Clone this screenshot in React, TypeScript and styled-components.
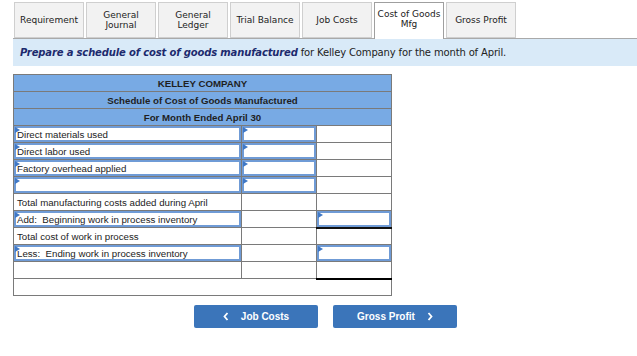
import React from 'react'
import styled, { createGlobalStyle } from 'styled-components'

const GlobalStyle = createGlobalStyle`
  * {
    box-sizing: border-box;
    margin: 0;
    padding: 0;
  }
  body {
    background: #ffffff;
    font-family: "DejaVu Sans", Verdana, sans-serif;
    color: #222222;
  }
`

const Page = styled.div`
  width: 637px;
  height: 356px;
  padding-left: 13px;
  display: flex;
  flex-direction: column;
`

const TabBar = styled.div`
  display: flex;
  align-items: flex-end;
  gap: 2px;
  height: 39px;
  padding-left: 1px;
  border-bottom: 1px solid #a9a9a9;
`

interface TabProps {
  $active?: boolean
}

const Tab = styled.div<TabProps>`
  width: 70px;
  height: ${p => (p.$active ? '37px' : '36px')};
  margin-bottom: ${p => (p.$active ? '-1px' : '0')};
  display: flex;
  align-items: center;
  justify-content: center;
  text-align: center;
  font-size: 9px;
  line-height: 10px;
  white-space: pre-line;
  color: #222;
  background: ${p => (p.$active ? '#ffffff' : '#f2f2f2')};
  border: 1px solid ${p => (p.$active ? '#9f9f9f' : '#cfcfcf')};
  border-bottom: ${p => (p.$active ? 'none' : '1px solid #cfcfcf')};
  padding-bottom: ${p => (p.$active ? '4px' : '0')};
`

const Instruction = styled.div`
  height: 27px;
  display: flex;
  align-items: center;
  padding-left: 7px;
  background: #d9eaf8;
  font-size: 10px;
  letter-spacing: -0.15px;
  color: #222;

  em {
    font-weight: bold;
    color: #1d2a6e;
    margin-right: 3px;
  }
`

const Schedule = styled.table`
  margin-top: 8px;
  width: 378px;
  border-collapse: collapse;
  border: 1px solid #7a7a7a;
  font-family: "Liberation Sans", Arial, sans-serif;
  font-size: 9.7px;
  table-layout: fixed;
`

const HeadCell = styled.td`
  height: 17px;
  background: #78aae4;
  border: 1px solid #7a7a7a;
  text-align: center;
  font-weight: bold;
  color: #1f1f1f;
  padding: 0;
`

interface CellProps {
  $input?: boolean
  $rule?: 'single' | 'double'
}

const Cell = styled.td<CellProps>`
  position: relative;
  height: 17px;
  padding: 0 3px;
  border: 1px solid #7a7a7a;
  border-bottom: ${p =>
    p.$rule === 'double' ? '2px solid #000' : p.$rule === 'single' ? '2px solid #111' : '1px solid #7a7a7a'};
  color: #222;
  white-space: pre;
  box-shadow: ${p => (p.$input ? 'inset 0 0 0 2px #6f9bd6' : 'none')};

  &::before {
    content: '';
    display: ${p => (p.$input ? 'block' : 'none')};
    position: absolute;
    top: 1px;
    left: 1px;
    width: 0;
    height: 0;
    border-left: 5px solid #3f78c6;
    border-top: 3px solid transparent;
    border-bottom: 3px solid transparent;
  }
`

const FootCell = styled.td`
  height: 17px;
  border: 1px solid #7a7a7a;
`

const ButtonRow = styled.div`
  display: flex;
  gap: 15px;
  margin-top: 9px;
  padding-left: 181px;
`

const NavButton = styled.button`
  width: 124px;
  height: 23px;
  display: flex;
  align-items: center;
  justify-content: center;
  gap: 12px;
  border: none;
  border-radius: 2px;
  background: #3b75ba;
  color: #ffffff;
  font-family: "Liberation Sans", Arial, sans-serif;
  font-size: 10px;
  font-weight: bold;
`

const Chevron = ({ dir }: { dir: 'left' | 'right' }) => (
  <svg width="6" height="9" viewBox="0 0 6 9">
    <path
      d={dir === 'left' ? 'M4.5 1 L1.5 4.5 L4.5 8' : 'M1.5 1 L4.5 4.5 L1.5 8'}
      stroke="#fff"
      strokeWidth="1.8"
      fill="none"
    />
  </svg>
)

const tabs = [
  'Requirement',
  'General\nJournal',
  'General\nLedger',
  'Trial Balance',
  'Job Costs',
  'Cost of Goods\nMfg',
  'Gross Profit',
]

type Row = {
  label: string
  labelInput?: boolean
  mid?: boolean
  right?: boolean
  rule?: 'single' | 'double'
}

const rows: Row[] = [
  { label: 'Direct materials used', labelInput: true, mid: true },
  { label: 'Direct labor used', labelInput: true, mid: true },
  { label: 'Factory overhead applied', labelInput: true, mid: true },
  { label: '', labelInput: true, mid: true },
  { label: 'Total manufacturing costs added during April' },
  { label: 'Add:  Beginning work in process inventory', labelInput: true, right: true, rule: 'single' },
  { label: 'Total cost of work in process' },
  { label: 'Less:  Ending work in process inventory', labelInput: true, right: true },
  { label: '', rule: 'double' },
]

export default function App() {
  return (
    <>
      <GlobalStyle />
      <Page>
        <TabBar>
          {tabs.map(t => (
            <Tab key={t} $active={t.startsWith('Cost')}>
              {t}
            </Tab>
          ))}
        </TabBar>
        <Instruction>
          <em>Prepare a schedule of cost of goods manufactured</em> for Kelley Company for the month of April.
        </Instruction>
        <Schedule>
          <colgroup>
            <col style={{ width: 228 }} />
            <col style={{ width: 75 }} />
            <col style={{ width: 75 }} />
          </colgroup>
          <tbody>
            <tr><HeadCell colSpan={3}>KELLEY COMPANY</HeadCell></tr>
            <tr><HeadCell colSpan={3}>Schedule of Cost of Goods Manufactured</HeadCell></tr>
            <tr><HeadCell colSpan={3}>For Month Ended April 30</HeadCell></tr>
            {rows.map((r, i) => (
              <tr key={i}>
                <Cell $input={r.labelInput}>{r.label}</Cell>
                <Cell $input={r.mid} />
                <Cell $input={r.right} $rule={r.rule} />
              </tr>
            ))}
            <tr><FootCell colSpan={3} /></tr>
          </tbody>
        </Schedule>
        <ButtonRow>
          <NavButton><Chevron dir="left" />Job Costs</NavButton>
          <NavButton>Gross Profit<Chevron dir="right" /></NavButton>
        </ButtonRow>
      </Page>
    </>
  )
}
